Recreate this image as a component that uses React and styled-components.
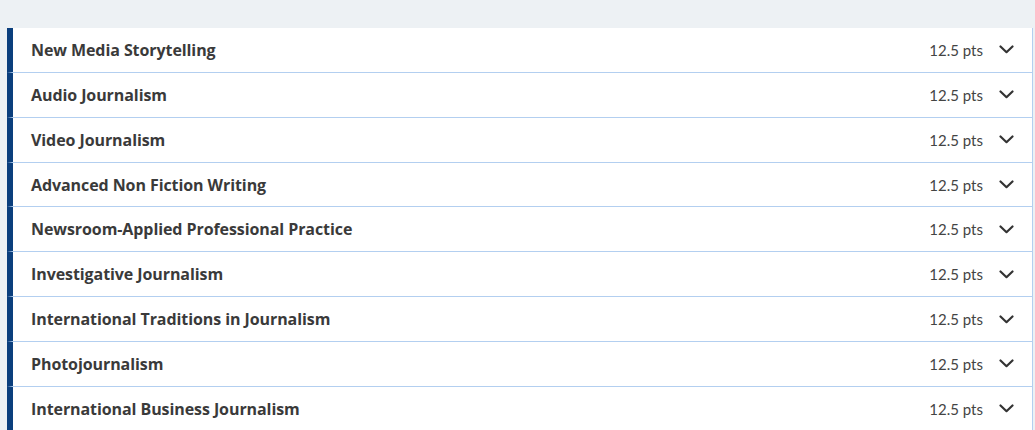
import React from "react";
import styled, { createGlobalStyle } from "styled-components";

const Global = createGlobalStyle`
  html, body { margin: 0; padding: 0; background: #edf1f4; }
  body { font-family: Lato, "Noto Sans", sans-serif; }
`;

const Page = styled.div`
  padding: 28px 2px 0 7px;
`;

const List = styled.ul`
  list-style: none;
  margin: 0;
  padding: 0;
  background: #fff;
`;

const Row = styled.li`
  display: flex;
  align-items: center;
  height: 43.86px;
  border-left: 6px solid #0b3f7d;
  border-right: 1px solid #b3cff0;
  border-bottom: 1px solid #b3cff0;
  padding: 0 18px 0 18px;
`;

const Title = styled.span`
  flex: 1;
  font-family: "Open Sans", sans-serif;
  font-size: 16px;
  font-weight: 700;
  letter-spacing: -0.08px;
  color: #3a3a3a;
`;

const Points = styled.span`
  font-size: 15px;
  color: #444;
  margin-right: 16px;
`;

const Chevron = () => (
  <svg width="15" height="9" viewBox="0 0 15 9" fill="none">
    <path d="M1.5 1.5 L7.5 7.2 L13.5 1.5" stroke="#333" strokeWidth="2.2" strokeLinecap="round" strokeLinejoin="round" />
  </svg>
);

const courses = [
  "New Media Storytelling",
  "Audio Journalism",
  "Video Journalism",
  "Advanced Non Fiction Writing",
  "Newsroom-Applied Professional Practice",
  "Investigative Journalism",
  "International Traditions in Journalism",
  "Photojournalism",
  "International Business Journalism",
];

export default function App() {
  return (
    <>
      <Global />
      <Page>
        <List>
          {courses.map((c) => (
            <Row key={c}>
              <Title>{c}</Title>
              <Points>12.5 pts</Points>
              <Chevron />
            </Row>
          ))}
        </List>
      </Page>
    </>
  );
}
